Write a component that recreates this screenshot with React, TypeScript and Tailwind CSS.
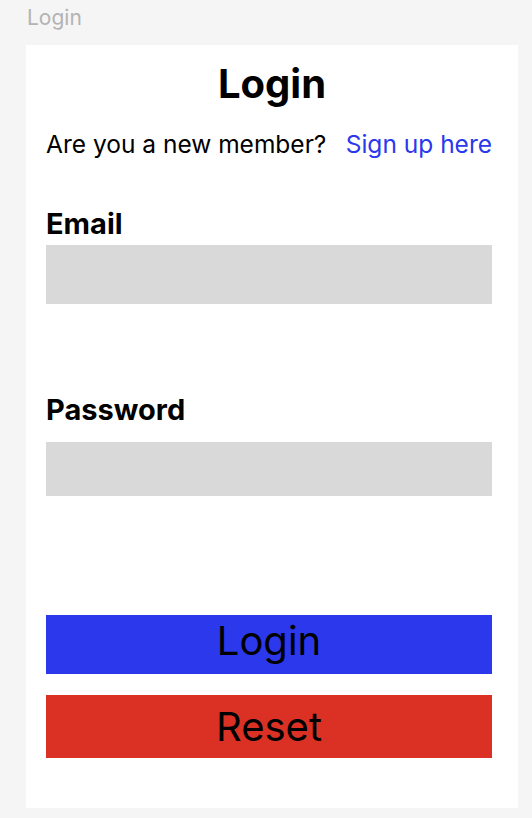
export default function App() {
  return (
    <div className="min-h-screen bg-[#f5f5f5] font-['Inter',sans-serif] text-black">
      <div className="pl-[27px] pt-[7px] text-[21px] leading-none text-[#b3b3b3]">
        Login
      </div>

      <div className="mt-[17px] ml-[26px] w-[492px] bg-white pl-[20px] pr-[26px] pt-[19px] pb-[50px]">
        <h1 className="-mr-[6px] text-center text-[40px] font-bold leading-none">
          Login
        </h1>

        <div className="mt-[28px] flex h-[24px] items-start justify-between text-[24.5px] leading-none">
          <span>Are you a new member?</span>
          <a href="#" className="text-[#2b38ec]">
            Sign up here
          </a>
        </div>

        <label className="mt-[53px] block text-[29px] font-bold leading-none">
          Email
        </label>
        <input
          type="email"
          className="mt-[7px] block h-[59px] w-full bg-[#d9d9d9] outline-none"
        />

        <label className="mt-[91px] block text-[29px] font-bold leading-none">
          Password
        </label>
        <input
          type="password"
          className="mt-[18px] block h-[54px] w-full bg-[#d9d9d9] outline-none"
        />

        <button
          type="button"
          className="mt-[119px] block h-[59px] w-full bg-[#2b38ec] pb-[8px] text-[40px] leading-none"
        >
          Login
        </button>
        <button
          type="button"
          className="mt-[21px] block h-[63px] w-full bg-[#db3125] text-[40px] leading-none"
        >
          Reset
        </button>
      </div>
    </div>
  );
}
